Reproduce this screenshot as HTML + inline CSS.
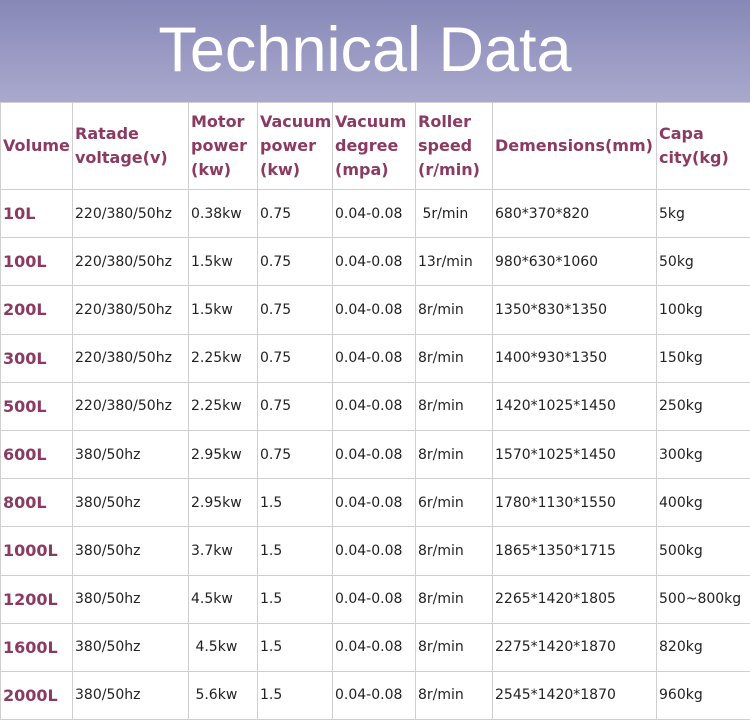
<!DOCTYPE html>
<html><head><style>
body{margin:0;width:750px;height:720px;overflow:hidden;background:#fff;font-family:"DejaVu Sans","Liberation Sans",sans-serif}
.hd{position:absolute;left:0;top:0;width:750px;height:102px;background:linear-gradient(#8888b8,#a9a9cd);}
.hd div{position:absolute;left:0;width:730px;top:14px;text-align:center;color:#fff;font-family:"Liberation Sans",sans-serif;font-size:63px}
table{position:absolute;left:0;top:102px;border-collapse:collapse;table-layout:fixed;width:751px}
td{border:1px solid #cfcfcf;padding:0 0 0 2px;font-size:14px;color:#222;height:47.2px;white-space:nowrap;overflow:hidden}
tr.h td{height:86px;color:#8b3a62;font-weight:bold;font-size:16px;line-height:24px;white-space:normal}
td.v{color:#8b3a62;font-weight:bold;font-size:16px}
</style></head><body>
<div class="hd"><div>Technical Data</div></div>
<table>
<colgroup><col style="width:72px"><col style="width:116px"><col style="width:69px"><col style="width:75px"><col style="width:83px"><col style="width:77px"><col style="width:164px"><col style="width:95px"></colgroup>
<tr class="h"><td>Volume</td><td>Ratade voltage(v)</td><td>Motor power (kw)</td><td>Vacuum power (kw)</td><td>Vacuum degree (mpa)</td><td>Roller speed (r/min)</td><td>Demensions(mm)</td><td>Capa city(kg)</td></tr>
<tr><td class="v">10L</td><td>220/380/50hz</td><td>0.38kw</td><td>0.75</td><td>0.04-0.08</td><td>&nbsp;5r/min</td><td>680*370*820</td><td>5kg</td></tr>
<tr><td class="v">100L</td><td>220/380/50hz</td><td>1.5kw</td><td>0.75</td><td>0.04-0.08</td><td>13r/min</td><td>980*630*1060</td><td>50kg</td></tr>
<tr><td class="v">200L</td><td>220/380/50hz</td><td>1.5kw</td><td>0.75</td><td>0.04-0.08</td><td>8r/min</td><td>1350*830*1350</td><td>100kg</td></tr>
<tr><td class="v">300L</td><td>220/380/50hz</td><td>2.25kw</td><td>0.75</td><td>0.04-0.08</td><td>8r/min</td><td>1400*930*1350</td><td>150kg</td></tr>
<tr><td class="v">500L</td><td>220/380/50hz</td><td>2.25kw</td><td>0.75</td><td>0.04-0.08</td><td>8r/min</td><td>1420*1025*1450</td><td>250kg</td></tr>
<tr><td class="v">600L</td><td>380/50hz</td><td>2.95kw</td><td>0.75</td><td>0.04-0.08</td><td>8r/min</td><td>1570*1025*1450</td><td>300kg</td></tr>
<tr><td class="v">800L</td><td>380/50hz</td><td>2.95kw</td><td>1.5</td><td>0.04-0.08</td><td>6r/min</td><td>1780*1130*1550</td><td>400kg</td></tr>
<tr><td class="v">1000L</td><td>380/50hz</td><td>3.7kw</td><td>1.5</td><td>0.04-0.08</td><td>8r/min</td><td>1865*1350*1715</td><td>500kg</td></tr>
<tr><td class="v">1200L</td><td>380/50hz</td><td>4.5kw</td><td>1.5</td><td>0.04-0.08</td><td>8r/min</td><td>2265*1420*1805</td><td>500~800kg</td></tr>
<tr><td class="v">1600L</td><td>380/50hz</td><td>&nbsp;4.5kw</td><td>1.5</td><td>0.04-0.08</td><td>8r/min</td><td>2275*1420*1870</td><td>820kg</td></tr>
<tr><td class="v">2000L</td><td>380/50hz</td><td>&nbsp;5.6kw</td><td>1.5</td><td>0.04-0.08</td><td>8r/min</td><td>2545*1420*1870</td><td>960kg</td></tr>
</table>
</body></html>
